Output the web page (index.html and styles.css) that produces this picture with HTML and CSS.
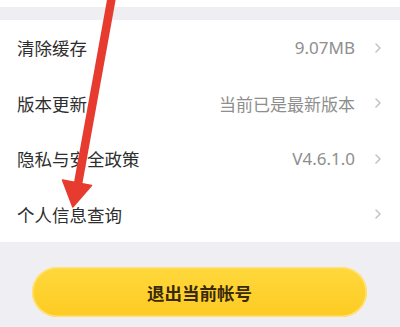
FILE: index.html
```html
<!DOCTYPE html>
<html lang="zh">
<head>
<meta charset="utf-8">
<link rel="stylesheet" href="styles.css">
</head>
<body>
<div class="page">
  <div class="top"></div>
  <div class="band"></div>
  <div class="list">
    <div class="row"><span class="label">清除缓存</span><span class="right"><span class="value">9.07MB</span><svg class="chev" viewBox="0 0 6 10"><path d="M1 1 L5 5 L1 9" fill="none" stroke="#c4c4c4" stroke-width="1.6" stroke-linecap="round" stroke-linejoin="round"/></svg></span></div>
    <div class="row"><span class="label">版本更新</span><span class="right"><span class="value">当前已是最新版本</span><svg class="chev" viewBox="0 0 6 10"><path d="M1 1 L5 5 L1 9" fill="none" stroke="#c4c4c4" stroke-width="1.6" stroke-linecap="round" stroke-linejoin="round"/></svg></span></div>
    <div class="row"><span class="label">隐私与安全政策</span><span class="right"><span class="value">V4.6.1.0</span><svg class="chev" viewBox="0 0 6 10"><path d="M1 1 L5 5 L1 9" fill="none" stroke="#c4c4c4" stroke-width="1.6" stroke-linecap="round" stroke-linejoin="round"/></svg></span></div>
    <div class="row"><span class="label">个人信息查询</span><span class="right"><svg class="chev" viewBox="0 0 6 10"><path d="M1 1 L5 5 L1 9" fill="none" stroke="#c4c4c4" stroke-width="1.6" stroke-linecap="round" stroke-linejoin="round"/></svg></span></div>
  </div>
  <div class="footer">
    <div class="logout">退出当前帐号</div>
  </div>
  <svg class="arrow" viewBox="0 0 400 327" width="400" height="327">
    <line x1="112" y1="-4" x2="78" y2="184" stroke="#e63b2e" stroke-width="8.5" stroke-linecap="round"/>
    <polygon points="62.5,180 91.5,185.5 72.8,207" fill="#e63b2e" stroke="#e63b2e" stroke-width="1.5" stroke-linejoin="round"/>
  </svg>
</div>
</body>
</html>
```
FILE: styles.css
```css
html, body {
  margin: 0;
  padding: 0;
  background: #ffffff;
}
.page {
  position: relative;
  width: 400px;
  height: 327px;
  overflow: hidden;
  font-family: "Noto Sans", "Noto Sans CJK SC", sans-serif;
  display: flex;
  flex-direction: column;
}
.top {
  height: 7px;
  background: #ffffff;
}
.band {
  height: 13px;
  background: #efeff3;
}
.list {
  background: #ffffff;
  display: flex;
  flex-direction: column;
}
.row {
  height: 55.5px;
  display: flex;
  align-items: center;
  justify-content: space-between;
  padding: 0 19px 0 17px;
}
.label {
  font-size: 17.5px;
  color: #2e2e2e;
}
.right {
  display: flex;
  align-items: center;
  gap: 20px;
}
.value {
  font-size: 17px;
  color: #8e8e8e;
}
.chev {
  width: 6px;
  height: 10px;
  display: block;
}
.footer {
  flex: 1;
  background: #efeff3;
  padding: 25px 33px 0 32px;
}
.logout {
  height: 50px;
  border-radius: 25px;
  background: linear-gradient(180deg, #ffd83c 0%, #fdcb22 100%);
  box-shadow: inset 0 0 0 1.5px #ffe27a;
  display: flex;
  align-items: center;
  justify-content: center;
  font-size: 17.5px;
  font-weight: bold;
  color: #3a2a08;
}
.arrow {
  position: absolute;
  left: 0;
  top: 0;
  pointer-events: none;
}
```
